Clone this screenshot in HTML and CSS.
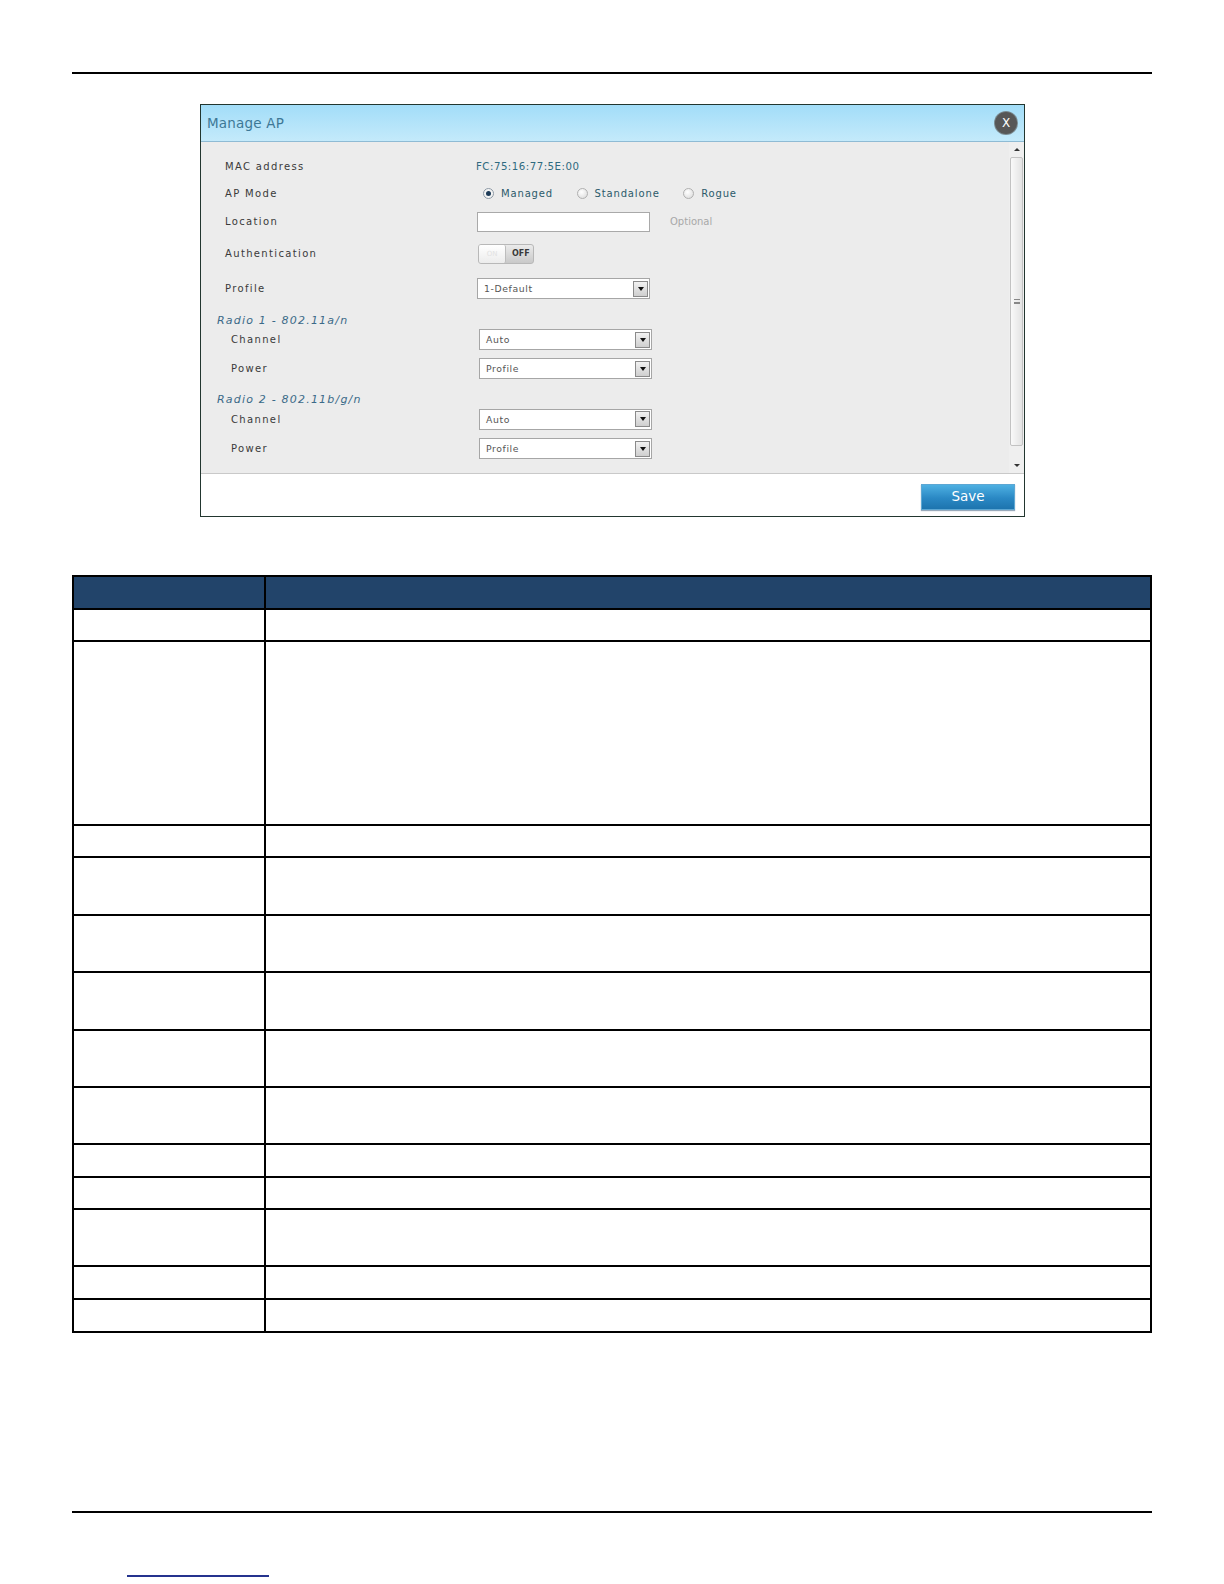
FILE: index.html
```html
<!DOCTYPE html>
<html>
<head>
<meta charset="utf-8">
<title>Manage AP</title>
<link rel="stylesheet" href="styles.css">
</head>
<body>
<div class="page">
  <div class="rule"></div>

  <div class="dialog">
    <div class="titlebar">
      <span class="title">Manage AP</span>
      <span class="close">X</span>
    </div>
    <div class="body">
      <div class="form">
        <div class="row r-mac">
          <span class="lbl">MAC address</span>
          <span class="value">FC:75:16:77:5E:00</span>
        </div>
        <div class="row r-mode">
          <span class="lbl">AP Mode</span>
          <span class="radios">
            <span class="radio-item"><span class="radio checked"></span><span class="radio-text">Managed</span></span>
            <span class="radio-item"><span class="radio"></span><span class="radio-text">Standalone</span></span>
            <span class="radio-item"><span class="radio"></span><span class="radio-text">Rogue</span></span>
          </span>
        </div>
        <div class="row r-loc">
          <span class="lbl">Location</span>
          <span class="input"></span>
          <span class="hint">Optional</span>
        </div>
        <div class="row r-auth">
          <span class="lbl">Authentication</span>
          <span class="toggle"><span class="knob">ON</span><span class="off">OFF</span></span>
        </div>
        <div class="row r-prof">
          <span class="lbl">Profile</span>
          <span class="select"><span class="sel-text">1-Default</span><span class="sel-btn"></span></span>
        </div>
        <div class="head h-1">Radio 1 - 802.11a/n</div>
        <div class="row r-ch1 sub">
          <span class="lbl">Channel</span>
          <span class="select"><span class="sel-text">Auto</span><span class="sel-btn"></span></span>
        </div>
        <div class="row r-pw1 sub">
          <span class="lbl">Power</span>
          <span class="select"><span class="sel-text">Profile</span><span class="sel-btn"></span></span>
        </div>
        <div class="head h-2">Radio 2 - 802.11b/g/n</div>
        <div class="row r-ch2 sub">
          <span class="lbl">Channel</span>
          <span class="select"><span class="sel-text">Auto</span><span class="sel-btn"></span></span>
        </div>
        <div class="row r-pw2 sub">
          <span class="lbl">Power</span>
          <span class="select"><span class="sel-text">Profile</span><span class="sel-btn"></span></span>
        </div>
      </div>
      <div class="scrollbar">
        <span class="sb-arrow up"></span>
        <span class="sb-thumb"><span class="grip"></span></span>
        <span class="sb-arrow down"></span>
      </div>
    </div>
    <div class="footer">
      <span class="save">Save</span>
    </div>
  </div>

  <table class="params">
    <tr class="hd"><td class="c1"></td><td class="c2"></td></tr>
    <tr class="t32"><td class="c1"></td><td class="c2"></td></tr>
    <tr class="t184"><td class="c1"></td><td class="c2"></td></tr>
    <tr class="t32"><td class="c1"></td><td class="c2"></td></tr>
    <tr class="t58"><td class="c1"></td><td class="c2"></td></tr>
    <tr class="t57"><td class="c1"></td><td class="c2"></td></tr>
    <tr class="t58"><td class="c1"></td><td class="c2"></td></tr>
    <tr class="t57"><td class="c1"></td><td class="c2"></td></tr>
    <tr class="t57"><td class="c1"></td><td class="c2"></td></tr>
    <tr class="t33"><td class="c1"></td><td class="c2"></td></tr>
    <tr class="t32"><td class="c1"></td><td class="c2"></td></tr>
    <tr class="t57"><td class="c1"></td><td class="c2"></td></tr>
    <tr class="t33"><td class="c1"></td><td class="c2"></td></tr>
    <tr class="t33"><td class="c1"></td><td class="c2"></td></tr>
  </table>

  <div class="rule bottom"></div>
  <div class="link-line"></div>
</div>
</body>
</html>
```

FILE: styles.css
```css
html, body {
  margin: 0;
  padding: 0;
  background: #ffffff;
}
body {
  font-family: "DejaVu Sans", Verdana, sans-serif;
}
.page {
  width: 1080px;
  padding: 72px 72px 0 72px;
}
.rule {
  height: 2px;
  background: #000;
}
.rule.bottom {
  margin-top: 178px;
}
.link-line {
  margin: 62px 0 0 55px;
  width: 142px;
  height: 2px;
  background: #25338e;
}

/* ---------- dialog ---------- */
.dialog {
  margin: 30px 0 0 128px;
  width: 825px;
  box-sizing: border-box;
  border: 1px solid #22362f;
  background: #fff;
}
.titlebar {
  height: 36px;
  border-bottom: 1px solid #8fbbd4;
  background: linear-gradient(#a2ddf8, #c4eafb);
  display: flex;
  align-items: center;
  justify-content: space-between;
  padding: 0 7px 0 6px;
}
.title {
  font-size: 13.5px;
  color: #3d7896;
  letter-spacing: 0.2px;
}
.close {
  width: 22px;
  height: 22px;
  border-radius: 50%;
  background: #575757;
  box-shadow: 0 0 0 1px #7a8a90;
  color: #fff;
  font-size: 12px;
  line-height: 22px;
  text-align: center;
}
.body {
  height: 331px;
  background: #ececec;
  display: flex;
}
.form {
  flex: 1;
  padding: 12px 0 0 24px;
}
.row {
  display: flex;
  align-items: center;
}
.lbl {
  width: 252px;
  font-size: 10px;
  letter-spacing: 1.35px;
  color: #3a3a3a;
}
.sub .lbl {
  margin-left: 6px;
  width: 248px;
}
.r-mac { height: 25px; }
.r-mode { height: 28px; }
.r-loc { height: 29px; }
.r-auth { height: 35px; }
.r-prof { height: 35px; }
.r-ch1 { height: 23px; }
.r-pw1 { height: 35px; }
.r-ch2 { height: 24px; }
.r-pw2 { height: 35px; }

.head {
  margin-left: -8px;
  font-size: 11px;
  font-style: italic;
  letter-spacing: 1.2px;
  line-height: 14px;
  color: #3b6a88;
}
.h-1 { height: 14px; padding-top: 8px; }
.h-2 { height: 14px; padding-top: 7px; }

.value {
  font-size: 10.2px;
  letter-spacing: 0.5px;
  color: #2f6a80;
  margin-left: -1px;
}
.radios {
  display: flex;
  gap: 23.5px;
  margin-left: 6px;
}
.radio-item {
  display: flex;
  align-items: center;
  gap: 7px;
}
.radio {
  width: 11px;
  height: 11px;
  box-sizing: border-box;
  border-radius: 50%;
  border: 1px solid #b0b0b0;
  background: radial-gradient(circle at 40% 35%, #ffffff, #d8d8d8);
  display: flex;
  align-items: center;
  justify-content: center;
}
.radio.checked {
  border-color: #8c98a4;
  background: #f4f4f4;
}
.radio.checked::after {
  content: "";
  width: 5px;
  height: 5px;
  border-radius: 50%;
  background: #1d3b58;
}
.radio-text {
  font-size: 10px;
  letter-spacing: 0.85px;
  color: #2b5a6a;
}
.input {
  width: 173px;
  height: 20px;
  box-sizing: border-box;
  border: 1px solid #a9a9a9;
  background: #fff;
}
.hint {
  margin-left: 20px;
  font-size: 10px;
  color: #a8a8a8;
}
.toggle {
  margin-left: 1px;
  width: 56px;
  height: 20px;
  box-sizing: border-box;
  border: 1px solid #b8b8b8;
  border-radius: 3px;
  background: linear-gradient(#ebebeb, #c9c9c9);
  display: flex;
  align-items: center;
}
.knob {
  width: 27px;
  height: 18px;
  box-sizing: border-box;
  border-right: 1px solid #bdbdbd;
  border-radius: 2px;
  background: linear-gradient(#ffffff, #ececec);
  font-size: 7px;
  line-height: 18px;
  text-align: center;
  color: #e2e2e2;
}
.off {
  margin-left: 6px;
  font-size: 8px;
  font-weight: bold;
  color: #3a3a3a;
}
.select {
  width: 173px;
  height: 21px;
  box-sizing: border-box;
  border: 1px solid #a6a6a6;
  background: #fff;
  display: flex;
  align-items: center;
  justify-content: space-between;
  padding: 0 1px 0 6px;
}
.sel-text {
  font-size: 9.3px;
  letter-spacing: 0.6px;
  color: #555;
}
.sel-btn {
  width: 15px;
  height: 16px;
  box-sizing: border-box;
  border: 1px solid #8a8a8a;
  background: linear-gradient(#f2f2f2, #cfcfcf);
  display: flex;
  align-items: center;
  justify-content: center;
}
.sel-btn::after {
  content: "";
  width: 0;
  height: 0;
  border-left: 3.5px solid transparent;
  border-right: 3.5px solid transparent;
  border-top: 4px solid #111;
}

/* scrollbar */
.scrollbar {
  width: 15px;
  display: flex;
  flex-direction: column;
  align-items: center;
  background: #efefef;
}
.sb-arrow {
  height: 15px;
  width: 15px;
  display: flex;
  align-items: center;
  justify-content: center;
}
.sb-arrow.up::after {
  content: "";
  border-left: 3px solid transparent;
  border-right: 3px solid transparent;
  border-bottom: 3px solid #333;
}
.sb-arrow.down {
  margin-top: 12px;
}
.sb-arrow.down::after {
  content: "";
  border-left: 3px solid transparent;
  border-right: 3px solid transparent;
  border-top: 3px solid #333;
}
.sb-thumb {
  width: 13px;
  height: 289px;
  box-sizing: border-box;
  border: 1px solid #c2c2c2;
  border-radius: 2px;
  background: linear-gradient(to right, #f9f9f9, #e3e3e3);
  display: flex;
  align-items: center;
  justify-content: center;
}
.grip {
  width: 6px;
  height: 5px;
  border-top: 1px solid #888;
  border-bottom: 1px solid #888;
  background: linear-gradient(transparent 2px, #888 2px, #888 3px, transparent 3px);
  box-sizing: border-box;
}

.footer {
  height: 43px;
  border-top: 1px solid #c9c9c9;
  background: #fff;
  display: flex;
  justify-content: flex-end;
  align-items: flex-start;
  padding: 10px 9px 0 0;
  box-sizing: border-box;
}
.save {
  width: 94px;
  height: 26px;
  box-sizing: border-box;
  border: 1px solid #5da7d3;
  background: linear-gradient(#4eb0e2, #2a88c4 55%, #1d74ae);
  box-shadow: 0 1px 1px #9ab;
  color: #fff;
  font-size: 13.5px;
  line-height: 23px;
  text-align: center;
}

/* ---------- table ---------- */
.params {
  margin-top: 58px;
  width: 1080px;
  border-collapse: separate;
  border-spacing: 0;
  border-top: 2px solid #000;
  border-left: 2px solid #000;
}
.params td {
  box-sizing: border-box;
  padding: 0;
  border-right: 2px solid #000;
  border-bottom: 2px solid #000;
}
.params .c1 {
  width: 191.5px;
}
.params .hd td {
  background: #22446a;
  height: 33px;
}
.t32 td { height: 32px; }
.t33 td { height: 33px; }
.t57 td { height: 57px; }
.t58 td { height: 58px; }
.t184 td { height: 184px; }
```
